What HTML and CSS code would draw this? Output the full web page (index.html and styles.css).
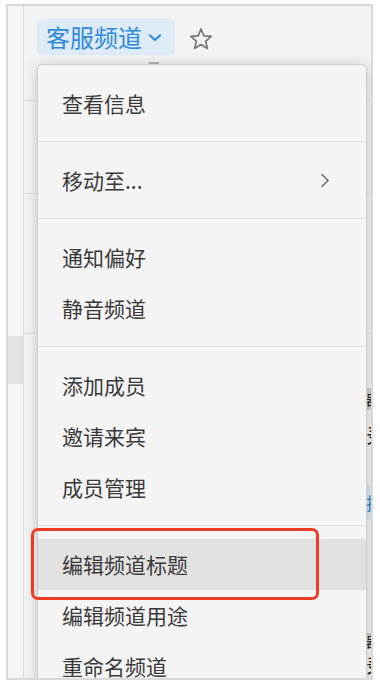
FILE: index.html
```html
<!DOCTYPE html>
<html lang="zh-CN">

<head>
    <meta charset="UTF-8">
    <title>客服频道</title>
    <link rel="stylesheet" href="styles.css">
</head>

<body>
    <div class="frame">
        <div class="rail">
            <div class="rail-band"></div>
        </div>
        <div class="main">
            <div class="header">
                <div class="channel">
                    <span>客服频道</span>
                    <svg class="caret" width="14" height="8" viewBox="0 0 14 8">
                        <path d="M2 1.5 L7 6 L12 1.5" fill="none" stroke="#2e8bd8" stroke-width="2.2" stroke-linecap="round" stroke-linejoin="round"/>
                    </svg>
                </div>
                <svg class="star" width="26" height="24" viewBox="0 0 26 24">
                    <path d="M13 2 L15.9 8.8 L23.2 9.4 L17.7 14.2 L19.4 21.4 L13 17.6 L6.6 21.4 L8.3 14.2 L2.8 9.4 L10.1 8.8 Z" fill="none" stroke="#767676" stroke-width="1.7" stroke-linejoin="round"/>
                </svg>
            </div>
            <div class="row row-two"></div>
            <div class="row row-three"></div>
            <div class="rest">
                <span class="peek tag t1">器</span>
                <span class="peek g2">录</span>
                <span class="peek tag blue t3">拉</span>
                <span class="peek tag t4">器</span>
                <span class="peek g5">录</span>
            </div>
        </div>

        <div class="menu">
            <span class="notch"></span>
            <div class="section">
                <div class="item">查看信息</div>
            </div>
            <div class="section">
                <div class="item">
                    <span>移动至...</span>
                    <svg class="arrow" width="10" height="15" viewBox="0 0 10 15">
                        <path d="M2 1.5 L8 7.5 L2 13.5" fill="none" stroke="#6b6b6b" stroke-width="1.5" stroke-linecap="round" stroke-linejoin="round"/>
                    </svg>
                </div>
            </div>
            <div class="section">
                <div class="item">通知偏好</div>
                <div class="item">静音频道</div>
            </div>
            <div class="section">
                <div class="item">添加成员</div>
                <div class="item">邀请来宾</div>
                <div class="item">成员管理</div>
            </div>
            <div class="section">
                <div class="item active">编辑频道标题</div>
                <div class="item">编辑频道用途</div>
                <div class="item">重命名频道</div>
            </div>
        </div>

        <div class="mark"></div>
    </div>
</body>

</html>
```

FILE: styles.css
```css
body {
    margin: 0;
    background: #fff;
    font-family: "Noto Sans CJK SC", "Noto Sans", sans-serif;
}

.frame {
    position: relative;
    display: flex;
    box-sizing: border-box;
    width: 367px;
    height: 676px;
    margin: 4px 0 0 6px;
    border: 2px solid #d9d9d9;
    background: #f3f3f3;
    overflow: hidden;
}

.rail {
    width: 15px;
    flex-shrink: 0;
    background: #f5f5f5;
    border-right: 1px solid #dcdcdc;
}

.rail-band {
    margin-top: 330px;
    height: 48px;
    background: #e3e3e3;
}

.main {
    flex: 1;
    display: flex;
    flex-direction: column;
}

.header {
    box-sizing: border-box;
    height: 95px;
    padding: 13px 0 0 13px;
    display: flex;
    align-items: flex-start;
    border-bottom: 1px solid #dedede;
}

.channel {
    display: flex;
    align-items: center;
    box-sizing: border-box;
    height: 36px;
    padding: 0 13px 0 9px;
    border-radius: 5px;
    background: #deeaf5;
    color: #2e8bd8;
    font-size: 24px;
    line-height: 36px;
}

.caret {
    margin-left: 6px;
    margin-top: 2px;
}

.star {
    margin: 8px 0 0 13px;
}

.row {
    box-sizing: border-box;
    border-bottom: 1px solid #dedede;
}

.row-two {
    height: 93px;
}

.row-three {
    height: 140px;
}

.rest {
    flex: 1;
    display: flex;
    flex-direction: column;
    align-items: flex-end;
}

.peek {
    display: block;
    width: 22px;
    margin-right: -17px;
    color: #222;
    font-size: 18px;
    line-height: 22px;
}

.tag {
    background: #cdcdcd;
    font-size: 14px;
}

.tag.blue {
    background: #dbe7f1;
    color: #2a87d0;
    font-size: 17px;
}

.t1 {
    margin-top: 54px;
    height: 22px;
}

.g2 {
    margin-top: 10px;
    height: 28px;
    font-size: 22px;
    line-height: 28px;
}

.t3 {
    margin-top: 37px;
    height: 35px;
    line-height: 35px;
}

.t4 {
    margin-top: 113px;
    height: 16px;
    line-height: 16px;
}

.g5 {
    margin-top: 6px;
    font-size: 20px;
}

.menu {
    position: absolute;
    left: 29px;
    top: 58px;
    box-sizing: border-box;
    width: 330px;
    height: 700px;
    background: #f4f4f4;
    border: 1px solid #cdcdcd;
    border-radius: 5px 5px 0 0;
    box-shadow: 0 2px 14px rgba(0, 0, 0, 0.2);
}

.notch {
    position: absolute;
    top: -3px;
    left: 111px;
    width: 10px;
    height: 2px;
    background: #a8a8a8;
}

.section {
    padding: 12.5px 0;
}

.section + .section {
    border-top: 1px solid #e1e1e1;
}

.item {
    display: flex;
    align-items: center;
    justify-content: space-between;
    height: 51px;
    padding: 0 36px 0 24px;
    color: #3a3a3a;
    font-size: 21px;
}

.item.active {
    background: #e1e1e1;
}

.mark {
    position: absolute;
    left: 23px;
    top: 522px;
    box-sizing: border-box;
    width: 288px;
    height: 72px;
    border: 3px solid #ef3a24;
    border-radius: 7px;
}
```
